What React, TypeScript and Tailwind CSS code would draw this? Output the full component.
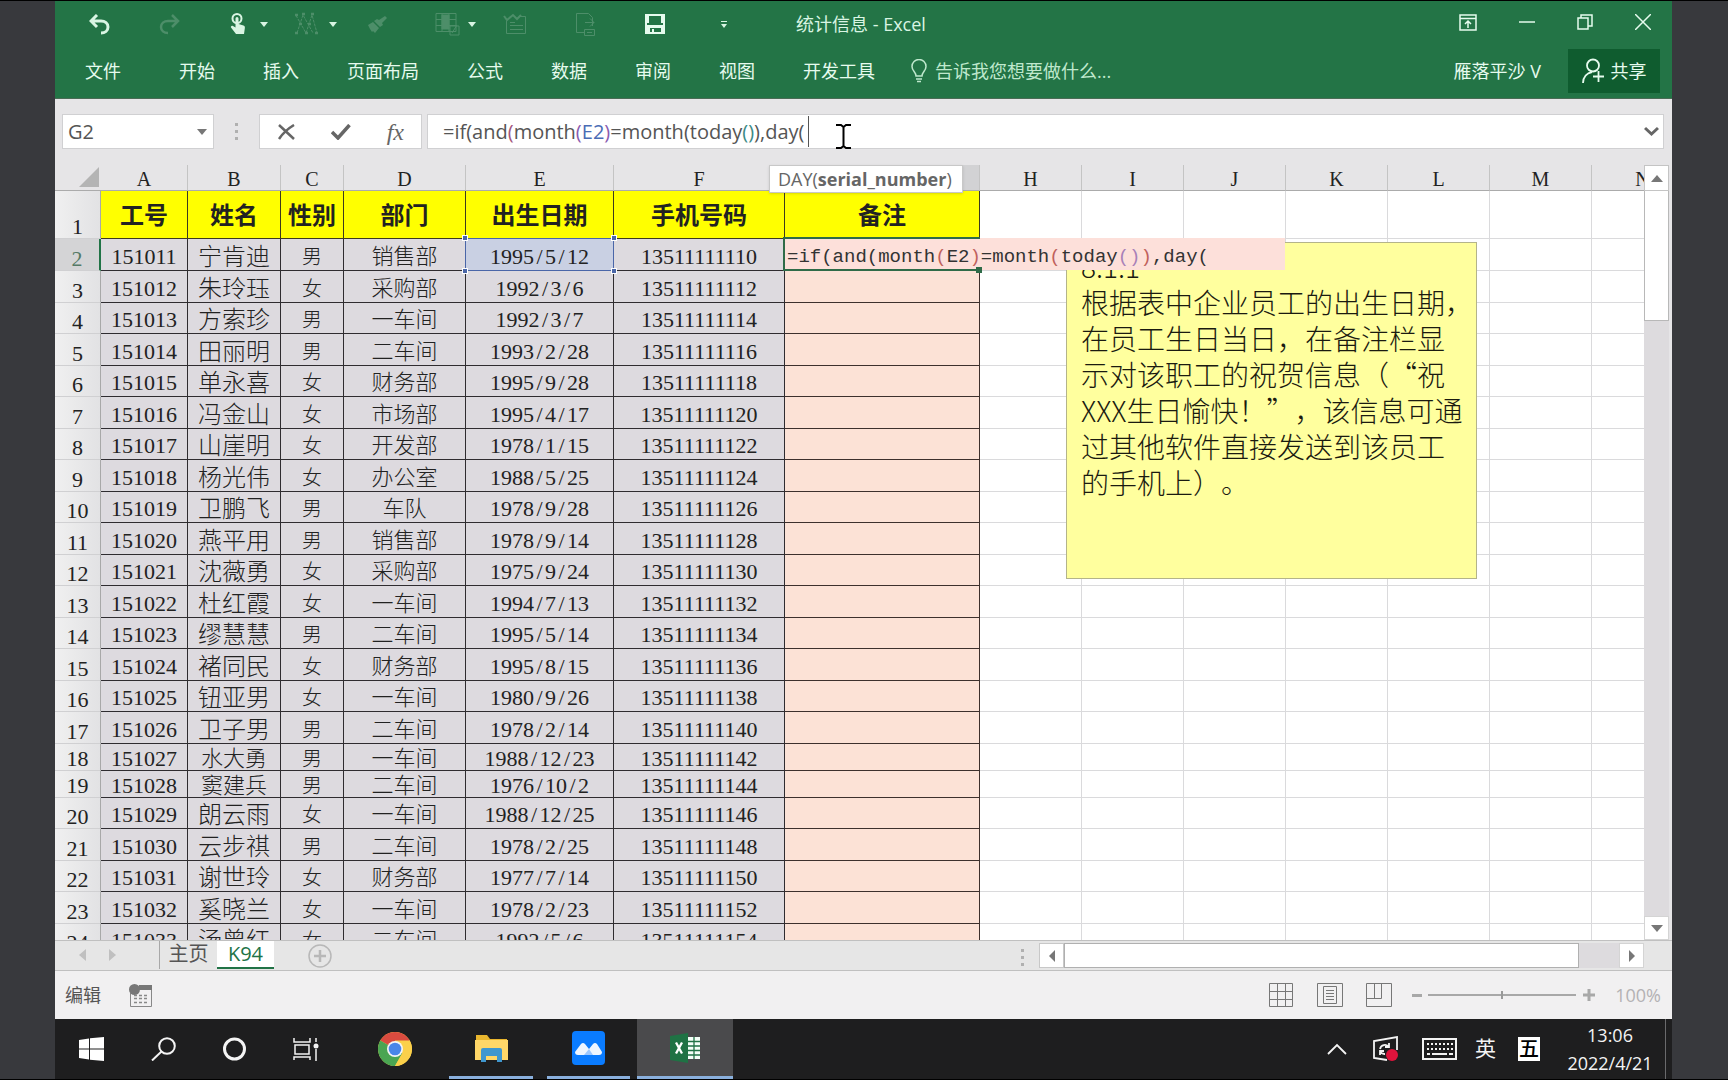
import React from "react";

const UI = "font-['Open_Sans','Noto_Sans_CJK_SC',sans-serif]";
const SHEET = "font-['Liberation_Serif','Noto_Sans_CJK_SC',serif]";

type Person = [string, string, string, string, string, string];

const people: Person[] = [
  ["151011", "宁肯迪", "男", "销售部", "1995/5/12", "13511111110"],
  ["151012", "朱玲珏", "女", "采购部", "1992/3/6", "13511111112"],
  ["151013", "方索珍", "男", "一车间", "1992/3/7", "13511111114"],
  ["151014", "田丽明", "男", "二车间", "1993/2/28", "13511111116"],
  ["151015", "单永喜", "女", "财务部", "1995/9/28", "13511111118"],
  ["151016", "冯金山", "女", "市场部", "1995/4/17", "13511111120"],
  ["151017", "山崖明", "女", "开发部", "1978/1/15", "13511111122"],
  ["151018", "杨光伟", "女", "办公室", "1988/5/25", "13511111124"],
  ["151019", "卫鹏飞", "男", "车队", "1978/9/28", "13511111126"],
  ["151020", "燕平用", "男", "销售部", "1978/9/14", "13511111128"],
  ["151021", "沈薇勇", "女", "采购部", "1975/9/24", "13511111130"],
  ["151022", "杜红霞", "女", "一车间", "1994/7/13", "13511111132"],
  ["151023", "缪慧慧", "男", "二车间", "1995/5/14", "13511111134"],
  ["151024", "褚同民", "女", "财务部", "1995/8/15", "13511111136"],
  ["151025", "钮亚男", "女", "一车间", "1980/9/26", "13511111138"],
  ["151026", "卫子男", "男", "二车间", "1978/2/14", "13511111140"],
  ["151027", "水大勇", "男", "一车间", "1988/12/23", "13511111142"],
  ["151028", "窦建兵", "男", "二车间", "1976/10/2", "13511111144"],
  ["151029", "朗云雨", "女", "一车间", "1988/12/25", "13511111146"],
  ["151030", "云步祺", "男", "二车间", "1978/2/25", "13511111148"],
  ["151031", "谢世玲", "女", "财务部", "1977/7/14", "13511111150"],
  ["151032", "奚晓兰", "女", "一车间", "1978/2/23", "13511111152"],
  ["151033", "汤曾红", "女", "二车间", "1992/5/6", "13511111154"],
];

const letters = ["A", "B", "C", "D", "E", "F", "G", "H", "I", "J", "K", "L", "M", "N"];
const blanks = ["H", "I", "J", "K", "L", "M", "N"];
const titles = ["工号", "姓名", "性别", "部门", "出生日期", "手机号码", "备注"];

function rowHeight(row: number) {
  if (row === 18 || row === 19) return "h-[27px]";
  return row === 2 || row % 2 === 1 ? "h-8" : "h-[31px]";
}

function DateText({ value }: { value: string }) {
  return (
    <>
      {value.split("/").map((part, i) => (
        <React.Fragment key={i}>
          {i > 0 && <span className="inline-block w-[11px] text-center">/</span>}
          {part}
        </React.Fragment>
      ))}
    </>
  );
}

function Formula() {
  return (
    <>
      =if(and<span className="text-[#a3557c]">(</span>month<span className="text-[#8a5bb0]">(</span>
      <span className="text-[#4a6cb5]">E2</span>
      <span className="text-[#8a5bb0]">)</span>=month(today<span className="text-[#3b8a86]">()</span>),day(
    </>
  );
}

function CellFormula() {
  return (
    <>
      =if(and(month<span className="text-[#c0605c]">(</span>E2<span className="text-[#c0605c]">)</span>=month
      <span className="text-[#c0605c]">(</span>today<span className="text-[#a880b8]">()</span>
      <span className="text-[#c0605c]">)</span>,day(
    </>
  );
}

function Caret() {
  return <span className="block h-0 w-0 border-x-4 border-t-[5px] border-x-transparent border-t-[#d9f5e3]" />;
}

function IconButton({ label, className, children }: { label: string; className: string; children: React.ReactNode }) {
  return (
    <button aria-label={label} className={`flex shrink-0 items-center justify-center ${className}`}>
      {children}
    </button>
  );
}

function TitleBar() {
  return (
    <div className="flex h-[46px] items-center pl-[34px] text-[#d9f5e3]">
      <IconButton label="撤消" className="w-[21px]">
        <svg width="21" height="21" viewBox="0 0 21 21" fill="none" stroke="currentColor" strokeWidth="3">
          <path d="M8 1 2 7l6 6M2.500 7H12c4 0 7 2.500 7 6s-3 6-7 6" />
        </svg>
      </IconButton>
      <IconButton label="恢复" className="ml-[49px] w-[21px] text-[#4d8e69]">
        <svg width="21" height="21" viewBox="0 0 21 21" fill="none" stroke="currentColor" strokeWidth="2.500">
          <path d="m13 1 6 6-6 6M18.500 7H9c-4 0-7 2.500-7 6s3 6 7 6" />
        </svg>
      </IconButton>
      <IconButton label="触摸/鼠标模式" className="ml-[50px] w-4">
        <svg width="16" height="22" viewBox="0 0 16 22" fill="none">
          <circle cx="7" cy="5.500" r="4.500" stroke="currentColor" strokeWidth="2" />
          <path d="M5.500 5.500a1.500 1.500 0 0 1 3 0V11l5 1.500c1.500.500 1.500 1.500 1.300 3L14 21H6L1 14.500c-.5-1 .5-2.500 2-1.500l2.500 1.500z" fill="currentColor" />
        </svg>
      </IconButton>
      <IconButton label="触摸选项" className="ml-[14px] w-2">
        <Caret />
      </IconButton>
      <IconButton label="套索" className="ml-[27px] w-6 text-[#4d8e69]">
        <svg width="24" height="24" viewBox="0 0 24 24" fill="none" stroke="currentColor">
          <path d="M1 3.500 11 21 17 3l5 18M2 21 8 3l10 18" strokeDasharray="3 1" />
          <path d="M0 3h3M0 21h3M7 2h3M10 21h3M16 2h3M20 21h3M4 12h3M13 12h3" strokeWidth="2.500" />
        </svg>
      </IconButton>
      <IconButton label="套索选项" className="ml-[10px] w-2">
        <Caret />
      </IconButton>
      <IconButton label="格式刷" className="ml-[31px] w-[19px] text-[#4d8e69]">
        <svg width="19" height="19" viewBox="0 0 19 19" fill="currentColor">
          <path d="M17 1 19 3 14 8l1 2-3 2-6-6 3-2 2 1zM5 7l6 6-4 5-2-2-1 1-2-3-2-4z" />
        </svg>
      </IconButton>
      <IconButton label="数据透视表" className="ml-12 w-[25px] text-[#4d8e69]">
        <svg width="25" height="24" viewBox="0 0 25 24" fill="none" stroke="currentColor">
          <path d="M1 1.500h20v18H1zM1 7.500h20M1 13.500h20M7 1v18M14 1v18" />
          <path d="M7 3h7v14H7z" fill="currentColor" />
          <path d="M15 14h9v9h-9zM17 21l5-8" />
        </svg>
      </IconButton>
      <IconButton label="数据透视选项" className="ml-2 w-2">
        <Caret />
      </IconButton>
      <IconButton label="跟踪更改" className="ml-[27px] w-6 text-[#4d8e69]">
        <svg width="24" height="22" viewBox="0 0 24 22" fill="none" stroke="currentColor">
          <path d="M3.500 8v12.500h19V3.500H16M7 12.500h13M7 16.500h13M7 9.500h5" />
          <path d="m1 3 3 4 6-5 4 4 4-4" strokeWidth="2" />
        </svg>
      </IconButton>
      <IconButton label="导出" className="ml-12 w-[21px] text-[#4d8e69]">
        <svg width="21" height="24" viewBox="0 0 21 24" fill="none" stroke="currentColor">
          <path d="M9 20.500H1.500V1.500h12l4 4V14M10 10.500h9M15 6.500l4 4-4 4M9.500 17.500h10v6h-10zM12 20.500h5" />
        </svg>
      </IconButton>
      <IconButton label="保存" className="ml-[49px] w-5 text-[#e6fbee]">
        <svg width="20" height="20" viewBox="0 0 20 20" fill="none">
          <path d="M1 1h18v18H1z" stroke="currentColor" strokeWidth="2" />
          <path d="M1 11h18v8h-3v-5H5v5H1z" fill="currentColor" />
          <path d="M3 1v8M17 1v8M8 15v4" stroke="currentColor" strokeWidth="2" />
        </svg>
      </IconButton>
      <IconButton label="自定义快速访问工具栏" className="ml-[55px] w-2 flex-col gap-0.5">
        <span className="h-px w-1.5 bg-[#d9f5e3]" />
        <span className="block h-0 w-0 border-x-[3px] border-t-4 border-x-transparent border-t-[#d9f5e3]" />
      </IconButton>
      <h1 className="ml-[68px] text-lg">统计信息 - Excel</h1>
      <div className="ml-auto flex items-center gap-[42px] pr-[21px] pb-1 text-[#e6fbee]">
        <IconButton label="功能区显示选项" className="w-[18px]">
          <svg width="18" height="17" viewBox="0 0 18 17" fill="none" stroke="currentColor" strokeWidth="1.500">
            <path d="M1 1h16v15H1zM1 4.500h16M9 14V7M6 10l3-3 3 3" />
          </svg>
        </IconButton>
        <IconButton label="最小化" className="w-4">
          <svg width="16" height="16" viewBox="0 0 16 16" stroke="currentColor" strokeWidth="1.500">
            <path d="M0 8h16" />
          </svg>
        </IconButton>
        <IconButton label="还原" className="w-4">
          <svg width="16" height="16" viewBox="0 0 16 16" fill="none" stroke="currentColor" strokeWidth="1.500">
            <path d="M1 4h10v11H1zM4 4V1h11v11h-4" />
          </svg>
        </IconButton>
        <IconButton label="关闭" className="w-4">
          <svg width="16" height="16" viewBox="0 0 16 16" stroke="currentColor" strokeWidth="1.500">
            <path d="m0 0 16 16M16 0 0 16" />
          </svg>
        </IconButton>
      </div>
    </div>
  );
}

function RibbonTabs() {
  const tabs = ["开始", "插入", "页面布局", "公式", "数据", "审阅", "视图", "开发工具"];
  return (
    <nav className="flex h-[52px] items-center border-b border-[#4a6b55] pb-1 pl-[30px] text-lg whitespace-nowrap text-[#e6fbee]">
      <button>文件</button>
      <div className="ml-[58px] flex gap-12">
        {tabs.map((t) => (
          <button key={t}>{t}</button>
        ))}
      </div>
      <button className="ml-9 flex items-center gap-2 text-[#bfe8cd]">
        <svg width="16" height="24" viewBox="0 0 16 24" fill="none" stroke="currentColor" strokeWidth="1.500">
          <path d="M5 17c0-4-4-5-4-9.500a7 7 0 0 1 14 0C15 12 11 13 11 17zM5 20h6M6 22.500h4" />
        </svg>
        告诉我您想要做什么...
      </button>
      <button className="mr-[27px] ml-auto">雁落平沙 V</button>
      <button className="mr-3 flex h-11 w-[92px] items-center justify-center gap-1.5 bg-[#0f5c2f]">
        <svg width="23" height="26" viewBox="0 0 23 26" fill="none" stroke="currentColor" strokeWidth="1.800">
          <circle cx="11" cy="7.500" r="6" />
          <path d="M1 25c0-6 4-10 9-11M16.500 13v11M11 18.500h11" />
        </svg>
        共享
      </button>
    </nav>
  );
}

function FormulaBar() {
  return (
    <div className="flex h-[66px] items-start bg-[#e6e5e7] pt-[15px] pr-2 pl-[7px]">
      <div className="flex h-[35px] w-[152px] items-center border border-[#d0d0d2] bg-white pr-1.5 pl-[5px]">
        <input aria-label="名称框" defaultValue="G2" className="min-w-0 flex-1 bg-transparent text-xl text-[#555]" />
        <button aria-label="名称列表">
          <span className="block h-0 w-0 border-x-[5px] border-t-[6px] border-x-transparent border-t-[#777]" />
        </button>
      </div>
      <div className="flex h-[35px] w-[45px] flex-col items-center justify-center gap-1">
        <span className="size-[3px] bg-[#b0b0b0]" />
        <span className="size-[3px] bg-[#b0b0b0]" />
        <span className="size-[3px] bg-[#b0b0b0]" />
      </div>
      <div className="flex h-[35px] w-[163px] items-center justify-between border border-[#d0d0d2] bg-white px-[17px] text-[#666]">
        <button aria-label="取消">
          <svg width="19" height="16" viewBox="0 0 19 16" fill="none" stroke="currentColor" strokeWidth="2.500">
            <path d="m2 1 15 14M17 1C12 4 6 9 2 15" />
          </svg>
        </button>
        <button aria-label="输入">
          <svg width="20" height="16" viewBox="0 0 20 16" fill="none" stroke="currentColor" strokeWidth="3.500">
            <path d="m1 8 6 6L18.500 1" />
          </svg>
        </button>
        <button aria-label="插入函数" className="font-['Liberation_Serif',serif] text-2xl leading-none italic">
          fx
        </button>
      </div>
      <div className="relative ml-[5px] flex h-[35px] flex-1 items-center border border-[#d0d0d2] bg-white pr-1 pl-[15px]">
        <div role="textbox" aria-label="编辑栏" className="flex flex-1 items-center text-xl whitespace-nowrap text-[#555]">
          <span>
            <Formula />
          </span>
          <span className="ml-1 h-[31px] w-px bg-[#555]" />
        </div>
        <button aria-label="展开编辑栏" className="text-[#666]">
          <svg width="15" height="11" viewBox="0 0 15 11" fill="none" stroke="currentColor" strokeWidth="3">
            <path d="m1 2 6.500 6L14 2" />
          </svg>
        </button>
        <svg className="absolute top-[9px] left-[408px]" width="15" height="25" viewBox="0 0 15 25" fill="none" stroke="#000" strokeWidth="2">
          <path d="M0 1h5l2.500 2L10 1h5M7.500 2v21M0 24h5l2.500-2 2.500 2h5" />
        </svg>
        <div className="absolute top-[50px] left-[341px] z-30 border border-[#c8c8c8] bg-white pr-2.5 pl-2 text-lg leading-[26px] whitespace-nowrap text-[#666] shadow-sm">
          DAY(<b>serial_number</b>)
        </div>
      </div>
    </div>
  );
}

function Handle({ className }: { className: string }) {
  return <span className={`absolute size-1.5 border border-white bg-[#4a66a8] ${className}`} />;
}

function Grid() {
  const head = "border-r border-b border-r-[#c4c4c4] border-b-[#ababab] p-0 pt-0.5 font-normal leading-[22px] text-xl";
  const cell = "border-r border-b border-[#2f2c30] bg-[#dddadf] p-0 pt-1";
  const blank = "border-r border-b border-[#dadadc] p-0";
  const rowHead =
    "border-b border-r border-b-[#d0d0d2] border-r-[#a8a8a8] bg-linear-to-r from-[#f0f0f0] to-[#e2e2e4] p-0 align-bottom font-normal leading-[22px]";
  return (
    <table className={`w-[1639px] table-fixed border-separate border-spacing-0 text-center text-[22px] leading-[22px] font-light whitespace-nowrap text-[#222] ${SHEET}`}>
      <colgroup>
        <col className="w-[46px]" />
        <col className="w-[87px]" />
        <col className="w-[93px]" />
        <col className="w-[63px]" />
        <col className="w-[122px]" />
        <col className="w-[148px]" />
        <col className="w-[171px]" />
        <col className="w-[195px]" />
        {blanks.map((b) => (
          <col key={b} className="w-[102px]" />
        ))}
      </colgroup>
      <thead>
        <tr className="h-[26px] bg-[#e6e5e7]">
          <th className="border-b border-[#ababab] p-0 pr-0.5 pb-0.5">
            <svg className="ml-auto" width="20" height="20" viewBox="0 0 20 20" fill="#b4b4b4">
              <path d="M20 0v20H0z" />
            </svg>
          </th>
          {letters.map((l) => (
            <th key={l} scope="col" className={`${head} ${l === "G" ? "bg-[#d2d2d4]" : ""}`}>
              {l}
            </th>
          ))}
        </tr>
      </thead>
      <tbody>
        <tr className="h-12">
          <th scope="row" className={rowHead}>
            1
          </th>
          {titles.map((t) => (
            <th key={t} className="border-r border-b border-[#3d3a1e] bg-[#ffff00] p-0 pt-[3px] text-2xl leading-[32px] font-bold">
              {t}
            </th>
          ))}
          {blanks.map((b) => (
            <td key={b} className={blank} />
          ))}
        </tr>
        {people.map((p, i) => {
          const row = i + 2;
          const compact = row === 18 || row === 19;
          return (
            <tr key={p[0]} className={rowHeight(row)}>
              <th
                scope="row"
                className={
                  row === 2
                    ? "border-r-2 border-b border-r-[#217346] border-b-[#d0d0d2] bg-[#d4d4d6] p-0 align-bottom leading-[22px] font-normal text-[#557a66]"
                    : rowHead
                }
              >
                {row}
              </th>
              <td className={cell}>{p[0]}</td>
              <td className={`${cell} ${compact ? "" : "text-2xl leading-[22px]"}`}>{p[1]}</td>
              <td className={`${cell} text-xl leading-[22px]`}>{p[2]}</td>
              <td className={cell}>{p[3]}</td>
              {row === 2 ? (
                <td className="relative border-r border-b border-[#4a66a8] bg-[#c9d0e3] p-0 pt-1">
                  <DateText value={p[4]} />
                  <span className="pointer-events-none absolute -top-px -right-px -bottom-px -left-px border border-[#4a66a8]" />
                  <Handle className="-top-1 -left-1" />
                  <Handle className="-top-1 -right-1" />
                  <Handle className="-bottom-1 -left-1" />
                  <Handle className="-right-1 -bottom-1" />
                </td>
              ) : (
                <td className={cell}>
                  <DateText value={p[4]} />
                </td>
              )}
              <td className={cell}>{p[5]}</td>
              {row === 2 ? (
                <td className="relative bg-[#fce2d6] p-0">
                  <div className="absolute -top-px left-0 z-20 h-8 w-[500px] bg-[#fde0da] pl-0.5 text-left font-['Liberation_Mono',monospace] text-[19px] leading-[38px] text-[#333]">
                    <CellFormula />
                  </div>
                  <span className="pointer-events-none absolute -top-0.5 right-0 -left-0.5 z-20 h-[34px] border-y-2 border-l-2 border-[#2f6b48]" />
                  <span className="absolute -right-0.5 -bottom-0.5 z-20 size-1.5 bg-[#2f6b48]" />
                </td>
              ) : (
                <td className="border-r border-b border-[#3d302d] bg-[#fce2d6] p-0" />
              )}
              {blanks.map((b) => (
                <td key={b} className={blank} />
              ))}
            </tr>
          );
        })}
      </tbody>
    </table>
  );
}

function Note() {
  const lines = [
    "8.1.1",
    "根据表中企业员工的出生日期，",
    "在员工生日当日，在备注栏显",
    "示对该职工的祝贺信息（“祝",
    "XXX生日愉快！”，该信息可通",
    "过其他软件直接发送到该员工",
    "的手机上）。",
  ];
  return (
    <div className="absolute top-[77px] left-[1011px] z-10 h-[337px] w-[411px] overflow-hidden border border-[#b4b48a] bg-[#ffff9e] pt-[5px] pl-3.5 font-['Noto_Sans_CJK_SC',sans-serif] text-[28px] leading-[36px] font-light whitespace-nowrap text-[#1a1a10] [text-spacing-trim:space-all]">
      {lines.map((l) => (
        <p key={l}>{l}</p>
      ))}
    </div>
  );
}

function VerticalScroll() {
  return (
    <div className="flex w-7 shrink-0 flex-col bg-[#e6e5e7] pr-[3px]">
      <button aria-label="向上滚动" className="flex h-[26px] items-center justify-center border border-[#c4c4c4] bg-white">
        <span className="h-0 w-0 border-x-[6px] border-b-[7px] border-x-transparent border-b-[#777]" />
      </button>
      <div className="flex-1 bg-[#dddbde]">
        <div className="h-[130px] border border-t-0 border-[#b8b8b8] bg-white" />
      </div>
      <button aria-label="向下滚动" className="flex h-6 items-center justify-center border border-[#d4d4d4] bg-white">
        <span className="h-0 w-0 border-x-[6px] border-t-[7px] border-x-transparent border-t-[#777]" />
      </button>
    </div>
  );
}

function SheetTabs() {
  return (
    <div className="flex h-[31px] items-start border-t border-b border-[#c0c0c0] bg-[#e6e6e6] text-xl leading-[26px]">
      <button aria-label="上一个工作表" className="mt-2 ml-6">
        <span className="block h-0 w-0 border-y-[6px] border-r-[7px] border-y-transparent border-r-[#c0c0c0]" />
      </button>
      <button aria-label="下一个工作表" className="mt-2 ml-[23px]">
        <span className="block h-0 w-0 border-y-[6px] border-l-[7px] border-y-transparent border-l-[#c0c0c0]" />
      </button>
      <span className="ml-[43px] h-7 w-px bg-[#a8a8a8]" />
      <button className="w-[57px] text-[#555]">主页</button>
      <button className="h-7 w-[57px] border-b-2 border-[#217346] bg-white text-[#217346]">K94</button>
      <button aria-label="新工作表" className="mt-[3px] ml-[34px] text-[#b8b8b8]">
        <svg width="24" height="24" viewBox="0 0 24 24" fill="none" stroke="currentColor">
          <circle cx="12" cy="12" r="11" strokeWidth="1.500" />
          <path d="M12 6v12M6 12h12" strokeWidth="2.500" />
        </svg>
      </button>
      <div className="mt-2 ml-auto flex w-[3px] flex-col gap-1">
        <span className="size-[3px] bg-[#b0b0b0]" />
        <span className="size-[3px] bg-[#b0b0b0]" />
        <span className="size-[3px] bg-[#b0b0b0]" />
      </div>
      <div className="mt-0.5 mr-7 ml-[15px] flex h-[25px] w-[605px] bg-[#dddbde]">
        <button aria-label="向左滚动" className="flex w-[25px] shrink-0 items-center justify-center border border-[#c8c8c8] bg-white">
          <span className="h-0 w-0 border-y-[6px] border-r-[6px] border-y-transparent border-r-[#777]" />
        </button>
        <div className="w-[515px] border border-[#b0b0b0] bg-white" />
        <button aria-label="向右滚动" className="ml-auto flex w-[25px] shrink-0 items-center justify-center border border-[#d4d4d4] bg-white">
          <span className="h-0 w-0 border-y-[6px] border-l-[6px] border-y-transparent border-l-[#777]" />
        </button>
      </div>
    </div>
  );
}

function StatusBar() {
  return (
    <div className="flex h-12 items-center bg-[#f1f0f1] pr-[11px] pl-2.5 text-lg text-[#777]">
      <span className="text-[#555]">编辑</span>
      <button aria-label="录制宏" className="ml-7">
        <svg width="23" height="23" viewBox="0 0 23 23" fill="none">
          <path d="M1.500 9v13.500h21V1" stroke="#888" />
          <path d="M10 1h13v5H10z" fill="#777" />
          <circle cx="5.500" cy="5.500" r="5.500" fill="#777" />
          <path d="M5 11.500h14M5 14.500h14M5 18.500h14" stroke="#888" strokeDasharray="3 2" strokeWidth="1.500" />
        </svg>
      </button>
      <button aria-label="普通" className="ml-auto">
        <svg width="24" height="24" viewBox="0 0 24 24" fill="none" stroke="currentColor">
          <path d="M.5.5h23v23H.5zM8.500 0v24M16.500 0v24M0 8.500h24M0 16.500h24" />
        </svg>
      </button>
      <button aria-label="页面布局" className="ml-6">
        <svg width="26" height="24" viewBox="0 0 26 24" fill="none" stroke="currentColor">
          <path d="M.5.5h25v23H.5zM6.500 3.500h13v17h-13zM9 7.500h8M9 10.500h8M9 13.500h8M9 16.500h8" />
        </svg>
      </button>
      <button aria-label="分页预览" className="ml-[23px]">
        <svg width="26" height="24" viewBox="0 0 26 24" fill="none" stroke="currentColor">
          <path d="M.5.5h25v23H.5zM.5 15.500h15V.5M8.500.5v15" />
        </svg>
      </button>
      <button aria-label="缩小" className="ml-5 h-[3px] w-2.5 bg-[#a8a8a8]" />
      <div className="ml-1.5 flex h-4 w-[148px] items-center">
        <input
          type="range"
          aria-label="显示比例"
          className="h-0.5 w-full appearance-none bg-[#a8a8a8] [&::-webkit-slider-thumb]:h-2 [&::-webkit-slider-thumb]:w-0.5 [&::-webkit-slider-thumb]:appearance-none [&::-webkit-slider-thumb]:bg-[#999]"
        />
      </div>
      <button aria-label="放大" className="ml-[7px] text-[#a8a8a8]">
        <svg width="12" height="12" viewBox="0 0 12 12" stroke="currentColor" strokeWidth="3">
          <path d="M6 0v12M0 6h12" />
        </svg>
      </button>
      <button className="ml-5 w-[46px] text-right text-[#b4b2b4]">100%</button>
    </div>
  );
}

function Taskbar() {
  return (
    <div className="flex h-[60px] items-stretch bg-[#1e1e1f] text-[#f4f4f4]">
      <button aria-label="开始" className="ml-6 flex items-center">
        <svg width="25" height="24" viewBox="0 0 25 24" fill="#fff">
          <path d="M0 3l10-1.500v10H0zM11 1.300 25 0v11.500H11zM0 12.500h10v10L0 21zM11 12.500h14V24l-14-1.300z" />
        </svg>
      </button>
      <button aria-label="搜索" className="ml-[47px] flex items-center">
        <svg width="25" height="24" viewBox="0 0 25 24" fill="none" stroke="currentColor" strokeWidth="2">
          <circle cx="16" cy="9" r="7.800" />
          <path d="M10.500 14.500 1 23.500" />
        </svg>
      </button>
      <button aria-label="Cortana" className="ml-[46px] flex items-center">
        <svg width="25" height="24" viewBox="0 0 25 24" fill="none" stroke="currentColor" strokeWidth="3">
          <circle cx="12.500" cy="12" r="10" />
        </svg>
      </button>
      <button aria-label="任务视图" className="ml-[46px] flex items-center">
        <svg width="26" height="24" viewBox="0 0 26 24" fill="none" stroke="currentColor" strokeWidth="1.500">
          <path d="M1 1v4h16V1M2 8h14v9H2zM1 23v-3h16v3M23 1v4M23 12v12" />
          <circle cx="23" cy="9" r="2.500" fill="currentColor" stroke="none" />
        </svg>
      </button>
      <button aria-label="Chrome" className="ml-[59px] flex items-center">
        <svg width="34" height="34" viewBox="0 0 34 34">
          <circle cx="17" cy="17" r="17" fill="#fbd04a" />
          <path d="M17 17 2.300 8.500A17 17 0 0 1 31.700 8.500z" fill="#d94b3f" />
          <path d="M17 17 2.300 8.500A17 17 0 0 0 17 34l7.500-13z" fill="#4aa552" />
          <path d="M17 17V8.500h14.700A17 17 0 0 1 17 34l7.400-13z" fill="#fbd04a" />
          <circle cx="17" cy="17" r="8" fill="#f4f4f4" />
          <circle cx="17" cy="17" r="6.300" fill="#4a86e8" />
        </svg>
      </button>
      <button aria-label="文件资源管理器" className="ml-[37px] flex w-[84px] items-center justify-center border-b-[3px] border-[#8ab0dd]">
        <svg width="33" height="28" viewBox="0 0 33 28">
          <path d="M1 1h11l3 4h17v21H1z" fill="#e9b62e" />
          <path d="M0 6h33v20H0z" fill="#ffd768" />
          <path d="M6 16q0-2 2-2h17q2 0 2 2v12h-5v-6H11v6H6z" fill="#3f97cf" />
        </svg>
      </button>
      <button aria-label="会议" className="ml-3.5 flex w-[83px] items-center justify-center border-b-[3px] border-[#8ab0dd]">
        <svg width="33" height="34" viewBox="0 0 33 34">
          <rect width="33" height="34" rx="4" fill="#0a7cff" />
          <path d="M3 21 9 13q2-2 4 0l4 5 4-5q2-2 4 0l5 8q0 3-3 3H6q-3 0-3-3z" fill="#eef6ff" />
          <path d="m12 24 5-6 4 6z" fill="#9cc8ff" />
        </svg>
      </button>
      <button aria-label="Excel" className="ml-[7px] flex w-24 items-center justify-center border-b-[3px] border-[#8ab0dd] bg-[#4a4a4c]">
        <svg width="31" height="30" viewBox="0 0 31 30">
          <path d="M17 4h13v22H17z" fill="#f4fff8" />
          <path d="M17 8.500h13M17 13h13M17 17.500h13M17 22h13M24 4v22" stroke="#217346" strokeWidth="1.300" />
          <path d="M0 3 18 0v30L0 27z" fill="#1f7244" />
          <path d="m6 9.500 6 11M12 9.500l-6 11" stroke="#fff" strokeWidth="2.300" />
        </svg>
      </button>
      <div className="ml-auto flex items-center">
        <button aria-label="显示隐藏的图标">
          <svg width="20" height="12" viewBox="0 0 20 12" fill="none" stroke="currentColor" strokeWidth="1.800">
            <path d="m1 11 9-9 9 9" />
          </svg>
        </button>
        <button aria-label="更新" className="ml-[26px]">
          <svg width="26" height="26" viewBox="0 0 26 26" fill="none" stroke="currentColor" strokeWidth="1.800">
            <path d="M14 24 1 22V5l23-4v13M7 13a5 5 0 0 1 9-2M16 7v4h-4M7 19v-4h4M7 15a5 5 0 0 0 5 3" />
            <circle cx="19" cy="19" r="6" fill="#e0143c" stroke="none" />
          </svg>
        </button>
        <button aria-label="触摸键盘" className="ml-[23px]">
          <svg width="35" height="22" viewBox="0 0 35 22" fill="none" stroke="currentColor" strokeWidth="2">
            <path d="M1 1h33v20H1z" />
            <path d="M5 6h26M5 11h26" strokeDasharray="2 2" />
            <path d="M5 16h3M10 16h15M27 16h4" />
          </svg>
        </button>
        <button className="ml-[18px] text-[21px]">英</button>
        <button className="ml-[22px] flex h-6 w-[22px] items-center justify-center overflow-hidden bg-white text-xl leading-none font-medium text-black">
          五
        </button>
        <time className="ml-[15px] w-[110px] text-center text-lg leading-[28px]">
          13:06
          <br />
          2022/4/21
        </time>
        <span className="mr-1.5 h-full w-px bg-[#6a6a6c]" />
      </div>
    </div>
  );
}

export default function App() {
  return (
    <div className={`h-screen min-h-[720px] bg-[#38393d] ${UI}`}>
      <div className="flex h-full flex-col border-t border-b border-black pr-14 pl-[55px]">
        <header className="bg-[#237446]">
          <TitleBar />
          <RibbonTabs />
        </header>
        <FormulaBar />
        <main className="flex min-h-0 flex-1 bg-white">
          <div className="relative min-w-0 flex-1 overflow-hidden">
            <Grid />
            <Note />
          </div>
          <VerticalScroll />
        </main>
        <SheetTabs />
        <StatusBar />
        <Taskbar />
      </div>
    </div>
  );
}
